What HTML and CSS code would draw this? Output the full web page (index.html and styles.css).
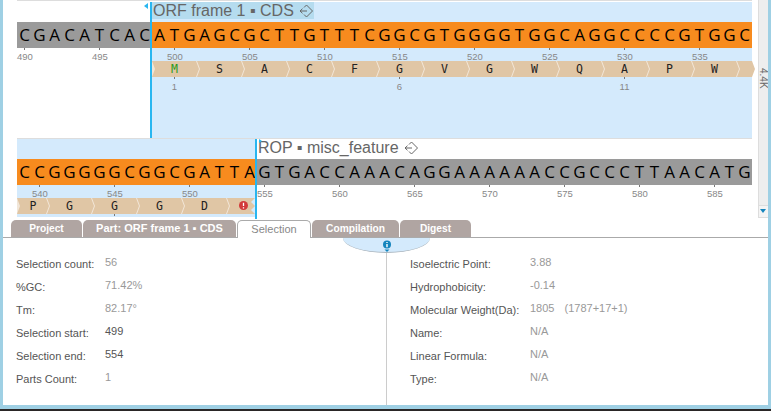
FILE: index.html
```html
<!DOCTYPE html>
<html>
<head>
<title>Sequence</title>
<link rel="stylesheet" href="styles.css">
</head>
<body>
    <div class="window">
        <div class="seq-pane">
            <div class="seq-scroll">
                <div class="seq-row seq-row-first">
                    <div class="run run-first">
                        <div class="part-label"></div>
                        <div class="bases bases-plain"><span>C</span><span>G</span><span>A</span><span>C</span><span>A</span><span>T</span><span>C</span><span>A</span><span>C</span></div>
                        <div class="ruler">
                            <div class="mark"><span>490</span></div>
                            <div class="mark"><span>495</span></div>
                        </div>
                    </div>
                    <div class="run run-selected run-start">
                        <div class="part-label part-label-active">ORF frame 1 ▪ CDS
                            <svg class="part-icon" width="14" height="14" viewBox="0 0 14 14"><path d="M7.5 1 L13.5 7 L7.5 13 L5 10.5 M7.5 1 L5 3.5 M1 7 H8 M3.5 4.7 L1 7 L3.5 9.3" fill="none" stroke="#666" stroke-width="1"/></svg>
                        </div>
                        <div class="bases bases-part"><span>A</span><span>T</span><span>G</span><span>A</span><span>G</span><span>C</span><span>G</span><span>C</span><span>T</span><span>T</span><span>G</span><span>T</span><span>T</span><span>T</span><span>C</span><span>G</span><span>G</span><span>C</span><span>G</span><span>T</span><span>G</span><span>G</span><span>G</span><span>G</span><span>T</span><span>G</span><span>G</span><span>C</span><span>A</span><span>G</span><span>G</span><span>C</span><span>C</span><span>C</span><span>C</span><span>G</span><span>T</span><span>G</span><span>G</span><span>C</span></div>
                        <div class="ruler ruler-offset">
                            <div class="mark"><span>500</span></div>
                            <div class="mark"><span>505</span></div>
                            <div class="mark"><span>510</span></div>
                            <div class="mark"><span>515</span></div>
                            <div class="mark"><span>520</span></div>
                            <div class="mark"><span>525</span></div>
                            <div class="mark"><span>530</span></div>
                            <div class="mark"><span>535</span></div>
                        </div>
                        <div class="aa-strip">
                            <div class="aa aa-start">M</div>
                            <div class="aa">S</div>
                            <div class="aa">A</div>
                            <div class="aa">C</div>
                            <div class="aa">F</div>
                            <div class="aa">G</div>
                            <div class="aa">V</div>
                            <div class="aa">G</div>
                            <div class="aa">W</div>
                            <div class="aa">Q</div>
                            <div class="aa">A</div>
                            <div class="aa">P</div>
                            <div class="aa">W</div>
                            <div class="aa aa-tail"></div>
                        </div>
                        <div class="aa-ruler">
                            <div class="aa-mark"><span>1</span></div>
                            <div class="aa-mark"><span>6</span></div>
                            <div class="aa-mark"><span>11</span></div>
                        </div>
                    </div>
                </div>
                <div class="seq-row seq-row-second">
                    <div class="run run-selected run-end">
                        <div class="part-label"></div>
                        <div class="bases bases-part"><span>C</span><span>C</span><span>G</span><span>G</span><span>G</span><span>G</span><span>G</span><span>C</span><span>G</span><span>G</span><span>C</span><span>G</span><span>A</span><span>T</span><span>T</span><span>A</span></div>
                        <div class="ruler ruler-offset">
                            <div class="mark"><span>540</span></div>
                            <div class="mark"><span>545</span></div>
                            <div class="mark"><span>550</span></div>
                        </div>
                        <div class="aa-strip aa-strip-short">
                            <div class="aa aa-head">P</div>
                            <div class="aa">G</div>
                            <div class="aa">G</div>
                            <div class="aa">G</div>
                            <div class="aa">D</div>
                            <div class="aa aa-stop">
                                <svg width="9" height="9" viewBox="0 0 9 9"><circle cx="4.5" cy="4.5" r="4.5" fill="#d23a3a"/><path d="M4.5 1.8 V5 M4.5 6.2 V7.4" stroke="#fff" stroke-width="1.3"/></svg>
                            </div>
                        </div>
                        <div class="aa-ruler aa-ruler-offset">
                            <div class="aa-mark"><span class="aa-tick"></span></div>
                        </div>
                    </div>
                    <div class="run run-last">
                        <div class="part-label part-label-next">ROP ▪ misc_feature
                            <svg class="part-icon" width="14" height="14" viewBox="0 0 14 14"><path d="M7.5 1 L13.5 7 L7.5 13 L5 10.5 M7.5 1 L5 3.5 M1 7 H8 M3.5 4.7 L1 7 L3.5 9.3" fill="none" stroke="#666" stroke-width="1"/></svg>
                        </div>
                        <div class="bases bases-plain"><span>G</span><span>T</span><span>G</span><span>A</span><span>C</span><span>C</span><span>A</span><span>A</span><span>A</span><span>C</span><span>A</span><span>G</span><span>G</span><span>A</span><span>A</span><span>A</span><span>A</span><span>A</span><span>A</span><span>C</span><span>C</span><span>G</span><span>C</span><span>C</span><span>C</span><span>T</span><span>T</span><span>A</span><span>A</span><span>C</span><span>A</span><span>T</span><span>G</span></div>
                        <div class="ruler">
                            <div class="mark"><span>555</span></div>
                            <div class="mark"><span>560</span></div>
                            <div class="mark"><span>565</span></div>
                            <div class="mark"><span>570</span></div>
                            <div class="mark"><span>575</span></div>
                            <div class="mark"><span>580</span></div>
                            <div class="mark"><span>585</span></div>
                        </div>
                    </div>
                </div>
            </div>
            <div class="scrollbar">
                <div class="scroll-track"><span class="scroll-size">4.4K</span></div>
                <div class="scroll-button"></div>
            </div>
        </div>

        <div class="tabs">
            <div class="tab tab-project">Project</div>
            <div class="tab tab-part">Part: ORF frame 1 ▪ CDS</div>
            <div class="tab tab-selection">Selection</div>
            <div class="tab tab-compilation">Compilation</div>
            <div class="tab tab-digest">Digest</div>
        </div>

        <div class="details">
            <div class="info-handle">
                <svg width="10" height="13" viewBox="0 0 10 13"><circle cx="5" cy="4.5" r="4" fill="#1585bd"/><path d="M5 2 V3 M5 4 V7.2" stroke="#fff" stroke-width="1.4"/><path d="M2.5 9.5 H7.5 L5 12 Z" fill="#1585bd"/></svg>
            </div>
            <div class="info-col info-col-left">
                <div class="info-label">Selection count:</div><div class="info-value">56</div>
                <div class="info-label">%GC:</div><div class="info-value">71.42%</div>
                <div class="info-label">Tm:</div><div class="info-value">82.17°</div>
                <div class="info-label">Selection start:</div><div class="info-value info-value-dark">499</div>
                <div class="info-label">Selection end:</div><div class="info-value info-value-dark">554</div>
                <div class="info-label">Parts Count:</div><div class="info-value">1</div>
            </div>
            <div class="info-col info-col-right">
                <div class="info-label">Isoelectric Point:</div><div class="info-value">3.88</div>
                <div class="info-label">Hydrophobicity:</div><div class="info-value">-0.14</div>
                <div class="info-label">Molecular Weight(Da):</div><div class="info-value">1805 <span class="info-note">(1787+17+1)</span></div>
                <div class="info-label">Name:</div><div class="info-value">N/A</div>
                <div class="info-label">Linear Formula:</div><div class="info-value">N/A</div>
                <div class="info-label">Type:</div><div class="info-value">N/A</div>
            </div>
        </div>
    </div>
</body>
</html>
```

FILE: styles.css
```css
html, body {
    margin: 0;
    height: 411px;
    overflow: hidden;
    background-color: #2a2626;
}

body {
    font-family: "Liberation Sans", sans-serif;
}

.window {
    display: flex;
    flex-direction: column;
    box-sizing: border-box;
    height: 409px;
    background-color: white;
    border: solid #9fd0e4;
    border-width: 0 3px 4px 3px;
}

.seq-pane {
    display: flex;
    height: 220px;
    flex-shrink: 0;
    overflow: hidden;
}

.seq-scroll {
    width: 735px;
    margin-left: 14px;
    margin-right: 6px;
}

.seq-row {
    display: flex;
    box-sizing: border-box;
    border-top: 1px solid #ddd;
    padding-top: 1px;
}

.seq-row-first {
    height: 138px;
}

.seq-row-second {
    height: 80px;
    padding-top: 0;
}

.run {
    position: relative;
}

.run-first {
    width: 135px;
}

.run-last {
    width: 495px;
}

.run-selected {
    background-color: #d4eafc;
}

.run-start {
    width: 600px;
}

.run-end {
    width: 240px;
    height: 78px;
}

/* selection cursor */
.run-start::before, .run-end::before {
    content: "";
    position: absolute;
    top: 0;
    width: 2px;
    background-color: #29b6f0;
    z-index: 2;
}

.run-start::before {
    left: -2px;
    bottom: 0;
}

.run-end::before {
    right: 0;
    bottom: -2px;
}

.run-start::after {
    content: "";
    position: absolute;
    top: 1px;
    left: -8px;
    border: solid transparent;
    border-width: 3px 4px 3px 0;
    border-right-color: #29b6f0;
}

.run-last::before {
    content: "";
    position: absolute;
    top: 0;
    left: 2px;
    border: solid transparent;
    border-width: 2px 0 2px 3px;
    border-left-color: #29b6f0;
}

.part-label {
    display: flex;
    align-items: center;
    gap: 5px;
    height: 20px;
    font-size: 16px;
    line-height: 18px;
    color: #666;
    white-space: nowrap;
}

.part-label-active {
    width: 161px;
    height: 17px;
    margin-bottom: 3px;
    padding-left: 1px;
    background-color: #b5dcef;
}

.part-label-next {
    height: 17px;
    margin-bottom: 3px;
    padding-left: 1px;
}

.part-icon {
    flex-shrink: 0;
}

.bases {
    display: flex;
    height: 26px;
    font-family: "Open Sans", sans-serif;
    font-size: 17px;
    line-height: 26px;
    color: #000;
}

.bases span {
    width: 15px;
    text-align: center;
}

.bases-plain {
    background-color: #9a9a9a;
}

.bases-part {
    background-color: #f78b1e;
}

.ruler {
    display: flex;
    height: 13px;
}

.ruler-offset {
    padding-left: 15px;
}

.mark {
    position: relative;
    flex: 0 0 75px;
    width: 75px;
    display: flex;
}

.mark span, .aa-mark span {
    display: block;
    text-align: center;
    font-size: 9.5px;
    color: #888;
}

.mark span {
    width: 15px;
    padding-top: 4px;
    line-height: 10px;
    background: linear-gradient(#777, #777) center top / 1px 2px no-repeat;
}

.aa-strip {
    display: flex;
    width: 600px;
    height: 16px;
    background-color: #f1e6d8;
}

.aa-strip-short {
    width: 234px;
}

.aa {
    flex: 0 0 47px;
    box-sizing: border-box;
    margin-right: -2px;
    padding-right: 2px;
    height: 16px;
    font-family: "DejaVu Sans Mono", monospace;
    font-size: 11.5px;
    line-height: 16px;
    text-align: center;
    color: #222;
    background-color: #e0c6a5;
    clip-path: polygon(0 0, calc(100% - 3px) 0, 100% 50%, calc(100% - 3px) 100%, 0 100%, 3px 50%);
}

.aa-start {
    color: #2a9a1c;
}

.aa-tail {
    flex-basis: 18px;
}

.aa-head {
    flex-basis: 32px;
    padding-left: 2px;
}

.aa-stop {
    flex-basis: 28px;
    margin-right: 0;
    padding: 3px 0 0 4px;
    line-height: 0;
    clip-path: polygon(0 0, 100% 0, calc(100% - 4px) 25%, 100% 50%, calc(100% - 4px) 75%, 100% 100%, 0 100%, 3px 50%);
}

.aa-ruler {
    display: flex;
}

.aa-ruler-offset {
    padding-left: 75px;
}

.aa-mark {
    flex: 0 0 225px;
}

.aa-mark span {
    width: 45px;
    padding-top: 5px;
    line-height: 10px;
    background: linear-gradient(#777, #777) center top / 1px 2px no-repeat;
}

.aa-mark .aa-tick {
    height: 2px;
    padding-top: 0;
}

.scrollbar {
    display: flex;
    flex-direction: column;
    width: 10px;
    height: 218px;
}

.scroll-track {
    box-sizing: border-box;
    height: 205px;
    padding-top: 68px;
    background-color: #eee;
    border-left: 1px solid #ddd;
}

.scroll-size {
    display: block;
    writing-mode: vertical-rl;
    font-size: 10px;
    line-height: 9px;
    color: #666;
}

.scroll-button {
    position: relative;
    height: 13px;
    box-sizing: border-box;
    background-color: #f4f4f4;
    border: 1px solid #ddd;
    border-right: none;
}

.scroll-button::after {
    content: "";
    position: absolute;
    left: 1px;
    top: 3px;
    border: solid transparent;
    border-width: 4px 3px 0 3px;
    border-top-color: #1585bd;
}

.tabs {
    display: flex;
    align-items: flex-end;
    flex-shrink: 0;
    box-sizing: border-box;
    height: 18px;
    padding-left: 8px;
    border-bottom: 1px solid #aaa;
}

.tab {
    box-sizing: border-box;
    height: 17px;
    margin-right: 1px;
    font-size: 10.2px;
    font-weight: bold;
    line-height: 17px;
    text-align: center;
    color: white;
    background-color: #b0a5a2;
    border-radius: 5px 5px 0 0;
}

.tab-project {
    width: 71px;
}

.tab-part {
    width: 153px;
    font-size: 11px;
}

.tab-selection {
    width: 74px;
    height: 18px;
    margin-bottom: -1px;
    font-size: 11px;
    font-weight: normal;
    color: #888;
    background-color: white;
    border: 1px solid #aaa;
    border-bottom: none;
}

.tab-compilation {
    width: 87px;
}

.tab-digest {
    width: 71px;
}

.details {
    position: relative;
    display: grid;
    grid-template-columns: 384px 1fr;
    flex: 1;
}

.info-handle {
    position: absolute;
    top: 0;
    left: 340px;
    box-sizing: border-box;
    width: 87px;
    height: 15px;
    padding-top: 2px;
    background-color: #d4eafc;
    border-bottom: 1px solid #aab4bc;
    border-radius: 0 0 50% 50% / 0 0 100% 100%;
}

.info-handle svg {
    display: block;
    margin: 0 auto;
}

.info-col {
    display: grid;
    grid-auto-rows: 23px;
    align-items: center;
    align-content: start;
    padding-top: 14px;
    font-size: 11px;
}

.info-col-left {
    grid-template-columns: 89px 1fr;
    padding-left: 13px;
    border-right: 1px solid #ccc;
}

.info-col-right {
    grid-template-columns: 120px 1fr;
    padding-left: 23px;
}

.info-label {
    color: #555;
}

.info-value {
    padding-bottom: 4px;
    color: #999;
}

.info-value-dark {
    color: #555;
}

.info-note {
    margin-left: 7px;
}
```
